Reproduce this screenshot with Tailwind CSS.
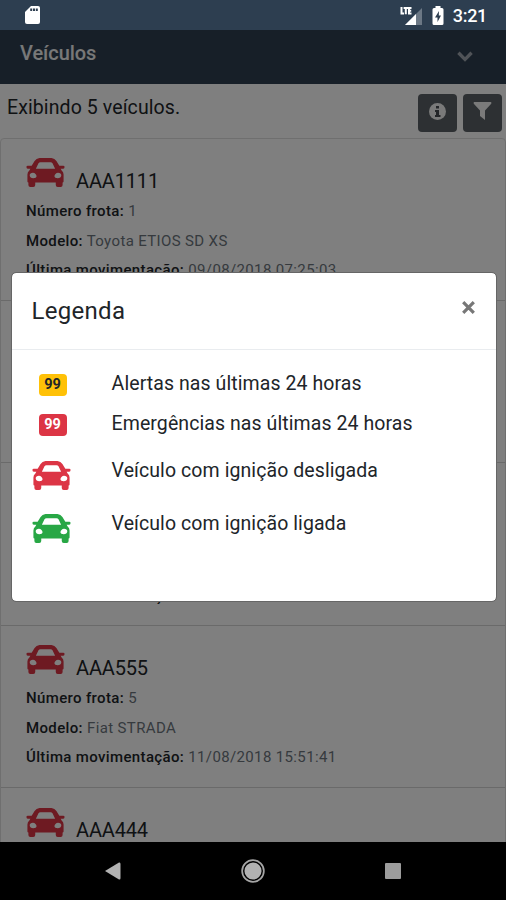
<!DOCTYPE html>
<html lang="pt-BR">
<head>
<meta charset="utf-8">
<meta name="viewport" content="width=device-width, initial-scale=1">
<title>Veículos</title>
<script src="https://cdn.jsdelivr.net/npm/@tailwindcss/browser@4"></script>
</head>
<body class="h-[900px] w-[506px] overflow-hidden bg-black font-['Roboto',sans-serif] text-[#212529]">
<svg class="hidden">
  <symbol id="car" viewBox="0 0 117 89">
    <path fill-rule="evenodd" d="M40 0H77Q87 1 92 9L101 24H113Q117 24 117 28Q117 33 113 33H105L108 38Q114 43 114 51V72Q114 75 111 75V83Q111 89 105 89H96Q90 89 90 83V75H27V83Q27 89 21 89H12Q6 89 6 83V75Q3 75 3 72V51Q3 43 9 38L12 33H4Q0 33 0 28Q0 24 4 24H16L25 9Q30 1 40 0ZM43 13Q39 13 37 16L29 33H88L80 16Q78 13 74 13ZM20 45C14 45 10 48 10 53C10 59 15 62 21 62C27 62 31 60 31 56C31 51 26 45 20 45ZM97 45C91 45 86 51 86 56C86 60 90 62 96 62C102 62 107 59 107 53C107 48 103 45 97 45Z"/>
  </symbol>
</svg>
<div class="flex h-full flex-col">
  <header class="flex h-[30px] shrink-0 items-center justify-between bg-[#2d3e50] pr-[19px] pl-[25px] text-white">
    <svg class="h-[18px] w-[15px]" viewBox="0 0 15 18"><path fill="#fff" d="M6 0H13Q15 0 15 2V16Q15 18 13 18H2Q0 18 0 16V6Z"/><path stroke="#2d3e50" stroke-width="2" d="M6.2 2.5V5M9 2.5V5M11.8 2.5V5"/></svg>
    <div class="flex items-center">
      <svg class="mr-px h-[19px] w-[22px]" viewBox="0 0 22 19"><path fill="#6c7885" d="M22 2V19H5Z"/><path fill="#fff" d="M16 8V19H5Z"/><path fill="none" stroke="#fff" stroke-width="2" d="M1.500 1V7.500H4M3.600 2H8M5.800 2V8.200M11.500 2H9V7.500H11.500M9 4.700H11.200"/></svg>
      <svg class="ml-[9px] h-[19px] w-[12px]" viewBox="0 0 12 19"><path fill="#fff" d="M3.5 0H8.5V2H10Q11.5 2 11.5 3.500V17.500Q11.500 19 10 19H2Q.5 19 .5 17.500V3.500Q.5 2 2 2H3.500Z"/><path fill="#2d3e50" d="M7 5L3 11.500H5.500V16L9 9.500H6.800Z"/></svg>
      <span class="mt-[2px] ml-[9px] text-[18px] leading-none font-medium tracking-[-0.3px]">3:21</span>
    </div>
  </header>
  <main class="relative h-[812px] shrink-0 overflow-hidden bg-white">
    <div class="flex h-[54px] items-start justify-between bg-[#2f3f50] pr-[33px] pl-5 text-white">
      <h1 class="mt-[10px] text-[20px] leading-[26px] font-medium tracking-[-0.05px] text-[#f0f0f0]">Veículos</h1>
      <svg class="mt-[21px] h-[11px] w-[16px]" viewBox="0 0 17 11"><path fill="none" stroke="#a0a7b0" stroke-width="3.500" d="M1.500 1.500L8.500 8.500L15.500 1.500"/></svg>
    </div>
    <div class="flex h-[53.500px] items-start justify-between pr-[4.500px] pl-[7px]">
      <p class="mt-[12px] text-[19.500px] leading-6 tracking-[0.1px]">Exibindo 5 veículos.</p>
      <div class="mt-[10px] flex gap-[5.500px]">
        <button class="flex h-[38px] w-[39px] justify-center rounded-[4px] bg-[#5a6166] pt-[8.500px]"><svg class="h-[17px] w-[17px]" viewBox="0 0 17 17"><circle cx="8.500" cy="8.500" r="8.500" fill="#f4f4f4"/><path fill="#484d52" d="M7 3H10V5.500H7ZM6 7H10V12H11.500V14H6V12H7V9H6Z"/></svg></button>
        <button class="flex h-[38px] w-[39px] justify-center rounded-[4px] bg-[#5a6166] pt-[8px]"><svg class="h-[18px] w-[19px]" viewBox="0 0 19 18"><path fill="#f4f4f4" d="M1 0H18Q19 1 18 2L12 8.500V18L7 14V8.500L1 2Q0 1 1 0Z"/></svg></button>
      </div>
    </div>
    <ul class="rounded-t-[4px] border border-[#dfdfdf] text-[15px] tracking-[0.36px]">
      <li class="h-[162.400px] border-b border-[#d4d4d4] px-[25px] pt-[19.500px]">
        <div class="flex h-[30px]"><svg class="h-[29px] w-[39px] fill-[#dc3545]"><use href="#car"/></svg><h2 class="mt-[10.500px] ml-[11px] text-[20px] leading-6 tracking-[-0.15px]">AAA1111</h2></div>
        <div class="mt-[9px] leading-[29.500px]"><p><b class="font-medium">Número frota:</b> <span class="text-[#6c757d]">1</span></p><p><b class="font-medium">Modelo:</b> <span class="text-[#6c757d]">Toyota ETIOS SD XS</span></p><p><b class="font-medium">Última movimentação:</b> <span class="text-[#6c757d]">09/08/2018 07:25:03</span></p></div>
      </li>
      <li class="h-[162.400px] border-b border-[#d4d4d4]"></li>
      <li class="flex h-[162.400px] items-end border-b border-[#d4d4d4] px-[25px] pb-[13.500px] leading-[29.500px]"><b class="font-medium">Última movimentação:</b></li>
      <li class="h-[162.400px] border-b border-[#d4d4d4] px-[25px] pt-[19.500px]">
        <div class="flex h-[30px]"><svg class="h-[29px] w-[39px] fill-[#dc3545]"><use href="#car"/></svg><h2 class="mt-[10.500px] ml-[11px] text-[20px] leading-6 tracking-[-0.15px]">AAA555</h2></div>
        <div class="mt-[9px] leading-[29.500px]"><p><b class="font-medium">Número frota:</b> <span class="text-[#6c757d]">5</span></p><p><b class="font-medium">Modelo:</b> <span class="text-[#6c757d]">Fiat STRADA</span></p><p><b class="font-medium">Última movimentação:</b> <span class="text-[#6c757d]">11/08/2018 15:51:41</span></p></div>
      </li>
      <li class="h-[162.400px] px-[25px] pt-[19.500px]">
        <div class="flex h-[30px]"><svg class="h-[29px] w-[39px] fill-[#dc3545]"><use href="#car"/></svg><h2 class="mt-[10.500px] ml-[11px] text-[20px] leading-6 tracking-[-0.15px]">AAA444</h2></div>
      </li>
    </ul>
    <div class="absolute inset-0 bg-black/50 px-[11px] pt-[242px]">
      <section class="h-[330px] w-[486px] rounded-[5px] border border-[#666] bg-white bg-clip-padding">
        <div class="flex h-[77px] items-start justify-between border-b border-[#e9ecef] pr-[21px] pl-[19.500px]">
          <h2 class="mt-[23px] text-[24px] leading-[30px] tracking-[0.3px]">Legenda</h2>
          <svg class="mt-[28px] h-[13px] w-[13px]" viewBox="0 0 13 13"><path stroke="#777" stroke-width="3.200" d="M1.200 1.200L11.800 11.800M11.800 1.200L1.200 11.800"/></svg>
        </div>
        <div class="grid grid-cols-[80px_1fr] pt-[22px] pl-[19.600px] text-[19.500px] leading-6 tracking-[0.08px]">
          <div class="h-[39.500px] pt-[2px] pl-[7px]"><span class="block h-[22px] w-[28px] rounded-[4px] bg-[#ffc107] text-center text-[14.500px] leading-[22px] font-bold">99</span></div><p>Alertas nas últimas 24 horas</p>
          <div class="h-[47px] pt-[2px] pl-[7px]"><span class="block h-[22px] w-[28px] rounded-[4px] bg-[#dc3545] text-center text-[14.500px] leading-[22px] font-bold text-white">99</span></div><p>Emergências nas últimas 24 horas</p>
          <div class="h-[53px] pt-[2px]"><svg class="h-[29px] w-[39px] fill-[#dc3545]"><use href="#car"/></svg></div><p>Veículo com ignição desligada</p>
          <div class="h-[53px] pt-[2px]"><svg class="h-[29px] w-[39px] fill-[#28a745]"><use href="#car"/></svg></div><p>Veículo com ignição ligada</p>
        </div>
      </section>
    </div>
  </main>
  <nav class="flex h-[58px] shrink-0 items-center bg-black pl-[105px]">
    <svg class="h-[18px] w-[16px]" viewBox="0 0 16 18"><path fill="#b2b2b2" d="M0 9L14 .5Q15.500 0 15.500 2V16Q15.500 18 14 17.500Z"/></svg>
    <svg class="ml-[120px] h-[24px] w-[24px]" viewBox="0 0 25 25"><circle cx="12.500" cy="12.500" r="11.300" fill="none" stroke="#a5a5a5" stroke-width="1.800"/><circle cx="12.500" cy="12.500" r="8.900" fill="#b2b2b2"/></svg>
    <span class="ml-[120px] h-4 w-4 rounded-[1px] bg-[#9c9c9c]"></span>
  </nav>
</div>
</body>
</html>
